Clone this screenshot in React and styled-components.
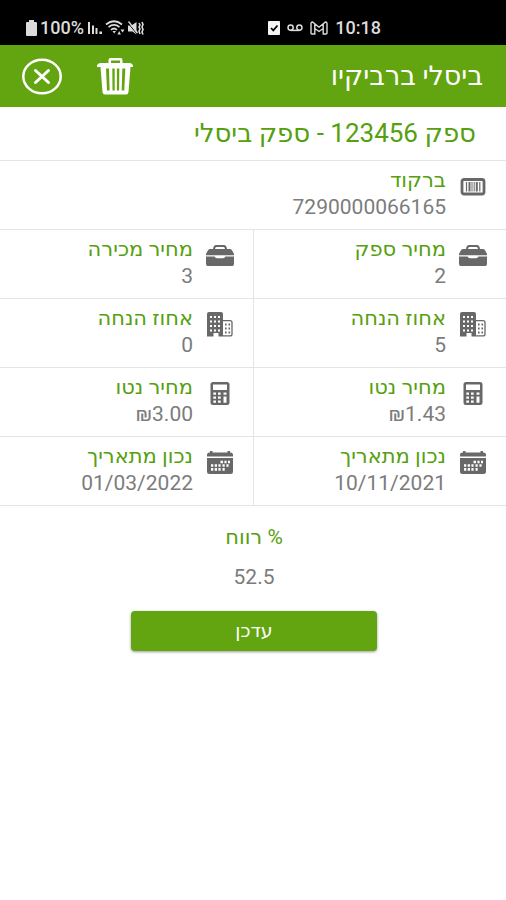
import React from "react";
import styled, { createGlobalStyle } from "styled-components";

const GREEN = "#63a510";
const GREEN_TEXT = "#55a00e";
const GREY = "#7c7c7c";
const ICON = "#686868";
const LINE = "#e4e4e4";

const GlobalStyle = createGlobalStyle`
  * { box-sizing: border-box; }
  body {
    margin: 0;
    background: #fff;
    font-family: Roboto, "DejaVu Sans", sans-serif;
  }
`;

const Screen = styled.div`
  min-height: 100vh;
  background: #fff;
`;

const StatusBar = styled.div`
  direction: ltr;
  display: flex;
  justify-content: space-between;
  height: 45px;
  padding: 11px 125px 0 26px;
  background: #000;
  color: #dcdcdc;
  font-size: 18px;
  font-weight: 500;
  line-height: 34px;
`;

const StatusGroup = styled.div`
  display: flex;
  align-items: center;
  height: 34px;
  gap: ${(p) => p.$gap}px;
`;

const AppBar = styled.header`
  display: flex;
  align-items: center;
  justify-content: space-between;
  height: 62px;
  padding: 0 23px 0 22px;
  background: ${GREEN};
  color: #fff;
`;

const AppTitle = styled.h1`
  margin: 0;
  font-size: 27px;
  font-weight: 400;
  line-height: 60px;
`;

const Actions = styled.div`
  display: flex;
  align-items: center;
  gap: 35px;
`;

const IconButton = styled.button`
  display: flex;
  padding: 0;
  border: 0;
  background: none;
  color: inherit;
  cursor: pointer;
`;

const Supplier = styled.h2`
  margin: 0;
  padding: 0 30px;
  color: ${GREEN_TEXT};
  font-size: 26px;
  font-weight: 400;
  line-height: 53px;
  border-bottom: 1px solid ${LINE};
`;

const Grid = styled.dl`
  display: grid;
  grid-template-columns: 1fr 1fr;
  margin: 0;
`;

const Cell = styled.div`
  display: flex;
  align-items: flex-start;
  gap: 13px;
  height: 69px;
  padding: 5px 19px 0 12px;
  border-bottom: 1px solid ${LINE};
  grid-column: ${(p) => (p.$wide ? "1 / -1" : "auto")};
  border-inline-end: ${(p) => (p.$divider ? `1px solid ${LINE}` : "0")};
`;

const CellIcon = styled.span`
  display: flex;
  flex: none;
  padding-top: 7px;
  color: ${ICON};
`;

const Label = styled.dt`
  color: ${GREEN_TEXT};
  font-size: 21px;
  line-height: 28px;
`;

const Value = styled.dd`
  margin: 0;
  color: ${GREY};
  font-size: 21px;
  line-height: 26px;
`;

const Summary = styled.section`
  display: flex;
  flex-direction: column;
  align-items: center;
  padding: 17px 129px 0 131px;
`;

const SummaryLabel = styled.div`
  color: ${GREEN_TEXT};
  font-size: 21px;
  line-height: 28px;
`;

const SummaryValue = styled.output`
  margin: 12px 0 20px;
  color: ${GREY};
  font-size: 21px;
  line-height: 28px;
`;

const UpdateButton = styled.button`
  width: 100%;
  height: 40px;
  border: 0;
  border-radius: 4px;
  background: ${GREEN};
  box-shadow: 0 1px 3px rgba(0, 0, 0, 0.4);
  color: #fff;
  font-family: inherit;
  font-size: 19px;
  line-height: 38px;
  cursor: pointer;
`;

const Battery = () => (
  <svg width="11" height="16" viewBox="0 0 11 16" fill="currentColor">
    <path d="M3 0h5v2h2a1 1 0 0 1 1 1v12a1 1 0 0 1-1 1H1a1 1 0 0 1-1-1V3a1 1 0 0 1 1-1h2z" />
  </svg>
);

const Signal = () => (
  <svg width="15" height="14" viewBox="0 0 15 14" fill="currentColor">
    <path d="M1 1h2v12H1zM5 4.500h2V13H5zM8.500 7h2v6h-2zM12.400 10.500H15V13h-2.600z" />
  </svg>
);

const Wifi = () => (
  <svg width="20" height="16" viewBox="0 0 20 16" fill="none" stroke="currentColor" strokeWidth="1.700">
    <path d="M1 4.500q8-6.500 16 0M3.500 7.200q5.500-4.500 11 0M6 9.800q3-2.600 6 0" />
    <path d="M7.500 11h3.500l-1.800 2.500zM12.500 14.500h3.400l-1.700-3.500zM15.500 9.500h4l-2 3z" fill="currentColor" stroke="none" />
  </svg>
);

const Muted = () => (
  <svg width="16" height="15" viewBox="0 0 16 15" fill="currentColor">
    <path d="M0 4.500h3.500l5-3.500v12.500l-4-3H0z" />
    <path d="M0 2l9 11" stroke="#000" strokeWidth="1" />
    <path d="M.5 .5l9 11.500" stroke="currentColor" strokeWidth="1.400" />
    <path d="M11 2l1 2-1 2 1 2-1 2 1 3M14 1l1 2.500L14 6l1 2.500L14 11l1 2.500" fill="none" stroke="currentColor" strokeWidth="1.600" />
  </svg>
);

const Checked = () => (
  <svg width="12" height="14" viewBox="0 0 12 14">
    <rect width="12" height="14" rx="1" fill="#f4f4f4" />
    <path d="M3 7l2.300 2.400L9.500 4.500" fill="none" stroke="#000" strokeWidth="1.700" />
  </svg>
);

const Voicemail = () => (
  <svg width="16" height="8" viewBox="0 0 16 8" fill="none" stroke="currentColor" strokeWidth="1.500">
    <circle cx="3.600" cy="3.600" r="2.600" />
    <circle cx="12.400" cy="3.600" r="2.600" />
    <path d="M3.600 6.400h8.800" />
  </svg>
);

const Mail = () => (
  <svg width="18" height="14" viewBox="0 0 18 14" fill="none" stroke="currentColor" strokeWidth="1.400">
    <path d="M1 2.500Q1 1 2.500 1L9 6.200 15.500 1Q17 1 17 2.500V12q0 1-1 1h-2.800V7.500L9 10.500 4.800 7.500V13H2q-1 0-1-1zM4.800 3v4.500M13.200 3v4.500" />
  </svg>
);

const CloseIcon = () => (
  <svg width="40" height="37" viewBox="0 0 40 37" fill="none" stroke="currentColor">
    <ellipse cx="20" cy="18.500" rx="18.700" ry="16.800" strokeWidth="2.500" />
    <path d="M13.500 12.500l13 12M26.500 12.500l-13 12" strokeWidth="3" strokeLinecap="round" />
  </svg>
);

const TrashIcon = () => (
  <svg width="37" height="37" viewBox="0 0 37 37" fill="currentColor" fillRule="evenodd">
    <path d="M11.500 5V2q0-2 2-2h10q2 0 2 2v3h7q2 0 3.500 2v2h-2.500l-2 25q-.2 2.500-2.500 2.500H8q-2.300 0-2.500-2.500L3.500 9H0V7q1.500-2 3.500-2zM14 5h9V2.500h-9zM9 10.500l1 22h2.600L12 10.500zM15.300 10.500l.2 22h2.200v-22zM19.900 10.500v22h2.200l.2-22zM25.300 10.500l-.6 22h2.600l1-22z" />
  </svg>
);

const BarcodeIcon = () => (
  <svg width="28" height="28" viewBox="0 0 28 28" fill="none" stroke="currentColor">
    <rect x="3" y="6.500" width="22" height="14.500" rx="2" strokeWidth="2.800" />
    <path d="M7.500 9v9.500M20.800 9v9.500" strokeWidth="1.200" />
    <path d="M10.500 9v9.500M17.800 9v9.500" strokeWidth="2" />
    <path d="M13 9v9.500M15.200 9v9.500" strokeWidth="1" />
  </svg>
);

const BriefcaseIcon = () => (
  <svg width="28" height="28" viewBox="0 0 28 28" fill="currentColor" fillRule="evenodd">
    <path d="M7 7q.5-4 3-4h8q2.500 0 3 4h3q1.500 0 2.200 1.500L28 12v1.200H0V12l1.800-3.500Q2.500 7 4 7zM9 7h10q-.3-2-1.500-2h-7Q9.300 5 9 7z" />
    <path d="M0 14.400h8.500q.8 1.800 2.500 1.800h6q1.700 0 2.500-1.800H28v7q0 2.600-2.500 2.600h-23Q0 24 0 21.400z" />
  </svg>
);

const BuildingIcon = () => (
  <svg width="28" height="28" viewBox="0 0 28 28" fill="currentColor" fillRule="evenodd">
    <path d="M3 1h12q2 0 2 2v22.500h-4.500V22h-5v3.500H1V3q0-2 2-2zM4 5v2h2V5zM8 5v2h2V5zM12 5v2h2V5zM4 9.500v2h2v-2zM8 9.500v2h2v-2zM12 9.500v2h2v-2zM4 14v2h2v-2zM8 14v2h2v-2zM12 14v2h2v-2zM4 18.400v2h2v-2zM8 18.400v2h2v-2zM12 18.400v2h2v-2z" />
    <path d="M17 9.600h7q2 0 2 2v11.600q0 1.700-2 1.700h-7" fill="none" stroke="currentColor" strokeWidth="1.300" />
    <path d="M19 12.500h1.600v2H19zM22.500 12.500h1.600v2h-1.600zM19 16.500h1.600v2H19zM22.500 16.500h1.600v2h-1.600zM19 20.500h1.600v2H19zM22.500 20.500h1.600v2h-1.600z" />
  </svg>
);

const CalculatorIcon = () => (
  <svg width="28" height="28" viewBox="0 0 28 28" fill="currentColor" fillRule="evenodd">
    <path d="M7 2h14q2.500 0 2.500 2.500v18Q23.500 25 21 25H7q-2.500 0-2.500-2.500v-18Q4.500 2 7 2zM7 4.500v5.500h14V4.500zM7.300 12.500v2.200h2.700v-2.200zM12 12.500v2.200h2.700v-2.200zM17.500 12.500v2.200h3v-2.200zM7.300 16.500v2.200h2.700v-2.200zM12 16.500v2.200h2.700v-2.200zM7.300 20.500v2.200h2.700v-2.200zM12 20.500v2.200h2.700v-2.200zM17.500 16.500v6.200h3v-6.200z" />
  </svg>
);

const CalendarIcon = () => (
  <svg width="28" height="28" viewBox="0 0 28 28" fill="currentColor" fillRule="evenodd">
    <path d="M1 7.500V6q0-2.500 2.500-2.500H4V2h2.500v1.500h15V2H24v1.500h.5Q27 3.500 27 6v1.500z" />
    <path d="M1 9h26v13.500q0 2.500-2.500 2.500h-21Q1 25 1 22.500zM14.500 11.800v2.400H17v-2.400zM18.400 11.800v2.400h2.200v-2.400zM22 11.800v2.400h2v-2.400zM5 15.300v2.400h2.300v-2.400zM8.700 15.300v2.400H11v-2.400zM12.400 15.300v2.400h2.200v-2.400zM16.500 15.300v2.400h2.200v-2.400zM20.400 15.300v2.400h2.200v-2.400zM5 19v2.800h2.300V19zM8.700 19v2.800H11V19zM12.400 19v2.800h2.200V19zM16.500 19v2.800h2.200V19z" />
  </svg>
);

const fields = [
  { label: "ברקוד", value: "7290000066165", icon: BarcodeIcon, wide: true },
  { label: "מחיר ספק", value: "2", icon: BriefcaseIcon, divider: true },
  { label: "מחיר מכירה", value: "3", icon: BriefcaseIcon },
  { label: "אחוז הנחה", value: "5", icon: BuildingIcon, divider: true },
  { label: "אחוז הנחה", value: "0", icon: BuildingIcon },
  { label: "מחיר נטו", value: "₪1.43", icon: CalculatorIcon, divider: true },
  { label: "מחיר נטו", value: "₪3.00", icon: CalculatorIcon },
  { label: "נכון מתאריך", value: "10/11/2021", icon: CalendarIcon, divider: true },
  { label: "נכון מתאריך", value: "01/03/2022", icon: CalendarIcon },
];

export default function App() {
  return (
    <Screen dir="rtl" lang="he">
      <GlobalStyle />
      <StatusBar>
        <StatusGroup $gap={3}>
          <Battery />
          <span>100%</span>
          <Signal />
          <Wifi />
          <Muted />
        </StatusGroup>
        <StatusGroup $gap={7}>
          <Checked />
          <Voicemail />
          <Mail />
          <span>10:18</span>
        </StatusGroup>
      </StatusBar>
      <AppBar>
        <AppTitle>ביסלי ברביקיו</AppTitle>
        <Actions>
          <IconButton type="button" aria-label="מחיקה">
            <TrashIcon />
          </IconButton>
          <IconButton type="button" aria-label="סגירה">
            <CloseIcon />
          </IconButton>
        </Actions>
      </AppBar>
      <main>
        <Supplier>ספק 123456 - ספק ביסלי</Supplier>
        <Grid>
          {fields.map(({ label, value, icon: Icon, wide, divider }, i) => (
            <Cell key={i} $wide={wide} $divider={divider}>
              <CellIcon>
                <Icon />
              </CellIcon>
              <div>
                <Label>{label}</Label>
                <Value>{value}</Value>
              </div>
            </Cell>
          ))}
        </Grid>
        <Summary>
          <SummaryLabel>% רווח</SummaryLabel>
          <SummaryValue>52.5</SummaryValue>
          <UpdateButton type="button">עדכן</UpdateButton>
        </Summary>
      </main>
    </Screen>
  );
}
